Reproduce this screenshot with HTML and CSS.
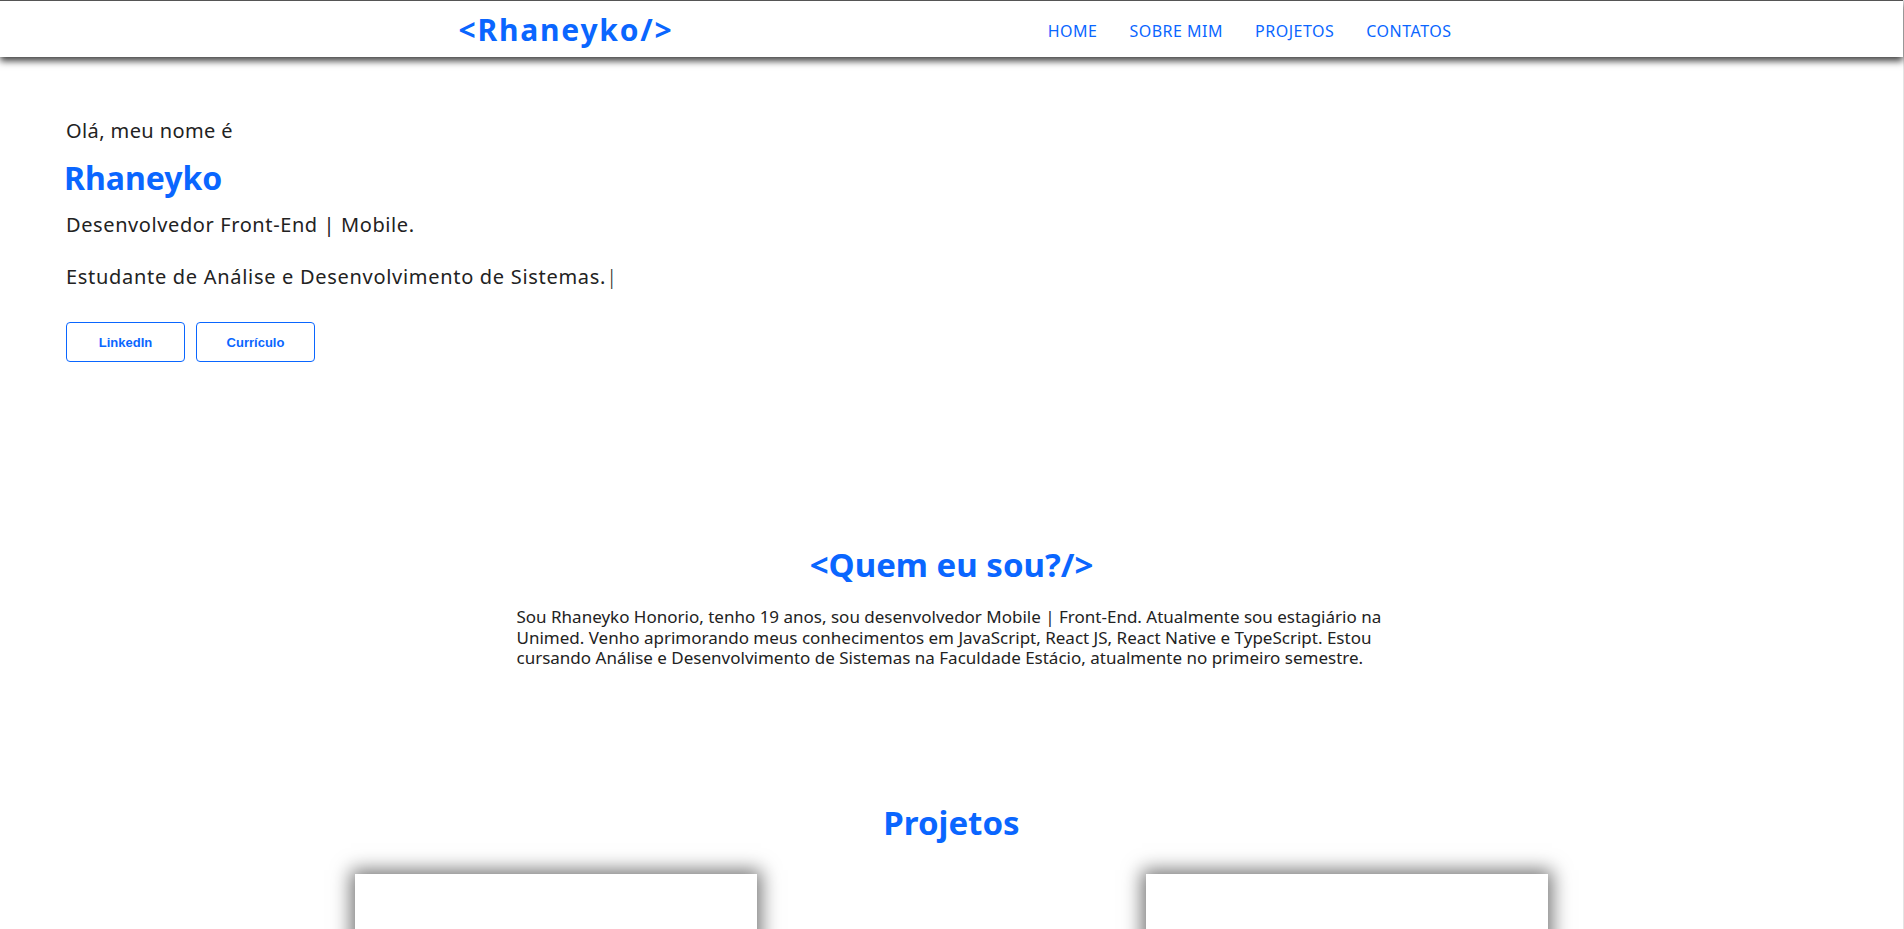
FILE: index.html
```html
<!DOCTYPE html>
<html lang="pt-BR">
<head>
<meta charset="utf-8">
<title>Rhaneyko</title>
<link rel="stylesheet" href="styles.css">
</head>
<body>
<div class="page">
  <header class="topbar">
    <div class="topbar-inner">
      <a class="logo" href="#">&lt;Rhaneyko/&gt;</a>
      <nav class="menu">
        <a href="#">HOME</a>
        <a href="#">SOBRE MIM</a>
        <a href="#">PROJETOS</a>
        <a href="#">CONTATOS</a>
      </nav>
    </div>
  </header>
  <main>
    <section class="hero">
      <p class="hello">Olá, meu nome é</p>
      <h1 class="name">Rhaneyko</h1>
      <p class="role">Desenvolvedor Front-End | Mobile.</p>
      <p class="study">Estudante de Análise e Desenvolvimento de Sistemas.<span class="caret">|</span></p>
      <div class="actions">
        <a class="btn" href="#">LinkedIn</a>
        <a class="btn" href="#">Currículo</a>
      </div>
    </section>
    <section class="about">
      <h2 class="section-title">&lt;Quem eu sou?/&gt;</h2>
      <p class="about-text">Sou Rhaneyko Honorio, tenho 19 anos, sou desenvolvedor Mobile | Front-End. Atualmente sou estagiário na Unimed. Venho aprimorando meus conhecimentos em JavaScript, React JS, React Native e TypeScript. Estou cursando Análise e Desenvolvimento de Sistemas na Faculdade Estácio, atualmente no primeiro semestre.</p>
    </section>
    <section class="projects">
      <h2 class="section-title">Projetos</h2>
      <div class="cards">
        <div class="card"></div>
        <div class="card"></div>
      </div>
    </section>
  </main>
</div>
</body>
</html>
```
FILE: styles.css
```css
* { box-sizing: border-box; }
html, body { margin: 0; padding: 0; background: #fff; }
body {
  font-family: "Noto Sans", "DejaVu Sans", sans-serif;
  color: #222;
  overflow: hidden;
}
.page {
  width: 1904px;
  border-right: 1px solid #e4e4e4;
  min-height: 929px;
}
.topbar {
  height: 57px;
  border-top: 1px solid #555;
  background: #fff;
  box-shadow: 0 4px 7px rgba(0,0,0,0.75);
  position: relative;
  z-index: 2;
}
.topbar-inner {
  width: 1000px;
  margin: 0 auto;
  height: 56px;
  display: flex;
  align-items: center;
  justify-content: space-between;
}
.logo {
  color: #0a66ff;
  text-decoration: none;
  font-weight: 700;
  font-size: 30px;
  letter-spacing: 1.8px;
  margin-left: 7px;
}
.menu { display: flex; gap: 32px; margin-top: 3px; }
.menu a {
  color: #0a66ff;
  text-decoration: none;
  font-size: 16px;
  letter-spacing: 0.5px;
}
.hero { padding: 62px 0 0 66px; }
.hello { margin: 0; font-size: 20px; line-height: 24px; letter-spacing: 0.4px; }
.name {
  margin: 13px 0 0 -2px;
  font-size: 32px;
  line-height: 44px;
  color: #0a66ff;
  font-weight: 700;
}
.role { margin: 12px 0 0; font-size: 20px; line-height: 26px; letter-spacing: 0.6px; }
.study { margin: 26px 0 0; font-size: 20px; line-height: 26px; letter-spacing: 0.7px; }
.caret { font-weight: 300; }
.actions { display: flex; gap: 11px; margin-top: 32px; }
.btn {
  width: 119px;
  height: 40px;
  border: 1px solid #0a66ff;
  border-radius: 4px;
  display: flex;
  align-items: center;
  justify-content: center;
  color: #0a66ff;
  text-decoration: none;
  font-family: "Liberation Sans", Arial, sans-serif;
  font-weight: 700;
  font-size: 13px;
}
.about { margin-top: 179px; text-align: center; }
.section-title {
  margin: 0;
  font-size: 33px;
  line-height: 48px;
  color: #0a66ff;
  font-weight: 700;
}
.about-text {
  width: 870px;
  margin: 18px auto 0;
  text-align: left;
  font-size: 17px;
  line-height: 20.6px;
}
.projects { margin-top: 130px; text-align: center; }
.cards {
  width: 1193px;
  margin: 27px auto 0;
  display: flex;
  justify-content: space-between;
}
.card {
  width: 402px;
  height: 320px;
  background: #fff;
  box-shadow: 0 0 18px 4px rgba(0,0,0,0.55);
}
```
